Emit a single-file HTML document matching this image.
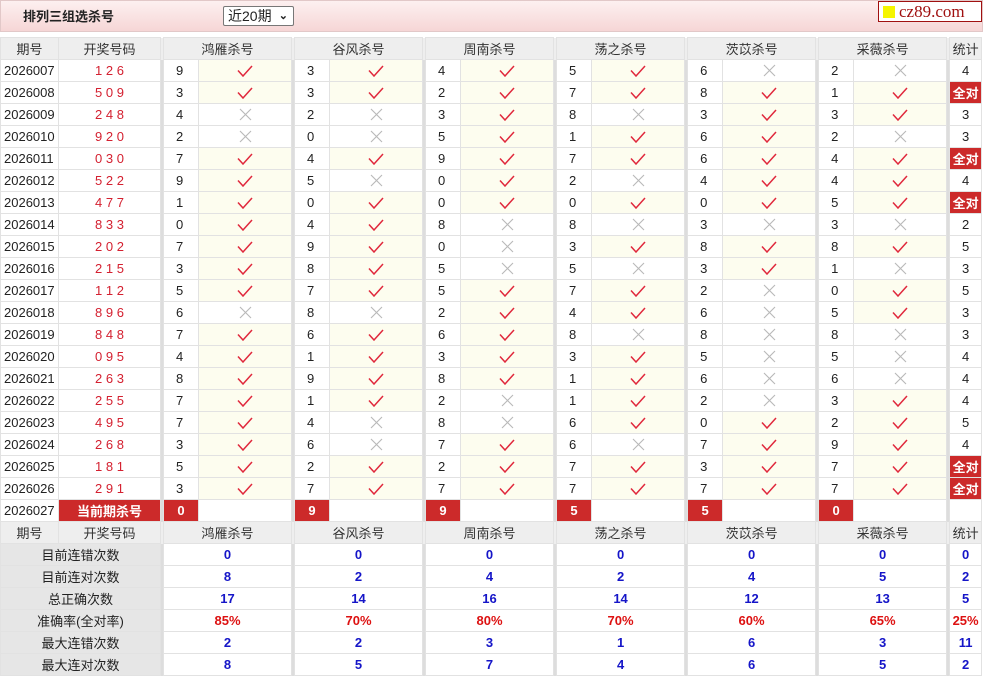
<!DOCTYPE html><html><head><meta charset="utf-8"><style>
body{margin:0;background:#fff;font-family:"Liberation Sans","Noto Sans CJK SC",sans-serif;font-size:13px;color:#222;width:983px;height:674px;overflow:hidden;position:relative}
.top{position:absolute;left:0;top:0;width:981px;height:30px;border:1px solid #e2c8c8;background:linear-gradient(#fdf0f0,#f6d6d6)}
.top b{position:absolute;left:22px;top:5px;font-size:13px}
.sel{position:absolute;left:222px;top:5px;border:1px solid #777;border-radius:2px;background:#fff;font-size:14px;line-height:18px;padding-left:4px;box-sizing:border-box;width:71px;height:20px}
.sel i{position:absolute;right:5px;top:0;font-style:normal;font-size:11px;font-weight:bold}
.logo{position:absolute;left:878px;top:1px;width:102px;height:19px;border:1px solid #a01010;background:#fff;font-family:"Liberation Serif",serif;color:#a01010;font-size:17px;line-height:19px}
.logo span{display:inline-block;width:12px;height:12px;background:#f5f500;margin:0 4px 0 4px;vertical-align:-1px}
table{position:absolute;left:0;top:37px;border-collapse:collapse;table-layout:fixed;width:981px}
td{height:21px;border:1px solid #e2e2e2;text-align:center;padding:0;white-space:pre;overflow:hidden}
tr.h td{background:#eee;color:#333}
td.s{background:#ddd;border:none;width:3px}
td.i{text-align:left;padding-left:3px}
td.k{color:#d42030}
td.n{text-align:left;padding-left:12px}
td.v{background:#fdfdef}
td.q{background:#cc2a2a;color:#fff;font-weight:bold}
td.l{background:#e6e6e6}
td.b{color:#1515c8;font-weight:bold}
td.r{color:#dd1111;font-weight:bold}
svg{display:block;margin:0 auto}
</style></head><body>
<div class="top"><b>排列三组选杀号</b><div class="sel">近20期<i>⌄</i></div></div>
<div class="logo"><span></span>cz89.com</div>
<table>
<colgroup><col style="width:58px"><col style="width:102px"><col style="width:3px"><col style="width:35px"><col style="width:93px"><col style="width:3px"><col style="width:35px"><col style="width:93px"><col style="width:3px"><col style="width:35px"><col style="width:93px"><col style="width:3px"><col style="width:35px"><col style="width:93px"><col style="width:3px"><col style="width:35px"><col style="width:93px"><col style="width:3px"><col style="width:35px"><col style="width:93px"><col style="width:3px"><col style="width:32px"></colgroup>
<tbody id="tb">
<tr class="h"><td>期号</td><td>开奖号码</td><td class="s"></td><td colspan="2">鸿雁杀号</td><td class="s"></td><td colspan="2">谷风杀号</td><td class="s"></td><td colspan="2">周南杀号</td><td class="s"></td><td colspan="2">荡之杀号</td><td class="s"></td><td colspan="2">茨苡杀号</td><td class="s"></td><td colspan="2">采薇杀号</td><td class="s"></td><td>统计</td></tr>
</tbody></table>
<script>
var V='<svg width="16" height="12"><path d="M1 5.5l5 5.5L15 1" fill="none" stroke="#e0283c" stroke-width="1.5"/></svg>';
var X='<svg width="13" height="13"><path d="M1 1l11 11M12 1L1 12" fill="none" stroke="#b8b8b8" stroke-width="1.1"/></svg>';
var d=[["2026007","126","9v3v4v5v6x2x","4"],["2026008","509","3v3v2v7v8v1v","A"],["2026009","248","4x2x3v8x3v3v","3"],["2026010","920","2x0x5v1v6v2x","3"],["2026011","030","7v4v9v7v6v4v","A"],["2026012","522","9v5x0v2x4v4v","4"],["2026013","477","1v0v0v0v0v5v","A"],["2026014","833","0v4v8x8x3x3x","2"],["2026015","202","7v9v0x3v8v8v","5"],["2026016","215","3v8v5x5x3v1x","3"],["2026017","112","5v7v5v7v2x0v","5"],["2026018","896","6x8x2v4v6x5v","3"],["2026019","848","7v6v6v8x8x8x","3"],["2026020","095","4v1v3v3v5x5x","4"],["2026021","263","8v9v8v1v6x6x","4"],["2026022","255","7v1v2x1v2x3v","4"],["2026023","495","7v4x8x6v0v2v","5"],["2026024","268","3v6x7v6x7v9v","4"],["2026025","181","5v2v2v7v3v7v","A"],["2026026","291","3v7v7v7v7v7v","A"]];
var h='';
d.forEach(function(r){h+='<tr><td class="i">'+r[0]+'</td><td class="k">'+r[1].split('').join(' ')+'</td>';
for(var j=0;j<6;j++){var c=r[2][j*2],m=r[2][j*2+1];h+='<td class="s"></td><td class="n">'+c+'</td><td class="'+m+'">'+(m=='v'?V:X)+'</td>';}
h+='<td class="s"></td>'+(r[3]=='A'?'<td class="q">全对</td>':'<td>'+r[3]+'</td>')+'</tr>';});
h+='<tr><td class="i">2026027</td><td class="q">当前期杀号</td>';
[0,9,9,5,5,0].forEach(function(c){h+='<td class="s"></td><td class="q">'+c+'</td><td></td>';});
h+='<td class="s"></td><td></td></tr>';
h+='<tr class="h"><td>期号</td><td>开奖号码</td><td class="s"></td><td colspan="2">鸿雁杀号</td><td class="s"></td><td colspan="2">谷风杀号</td><td class="s"></td><td colspan="2">周南杀号</td><td class="s"></td><td colspan="2">荡之杀号</td><td class="s"></td><td colspan="2">茨苡杀号</td><td class="s"></td><td colspan="2">采薇杀号</td><td class="s"></td><td>统计</td></tr>';
var st=[["目前连错次数","0 0 0 0 0 0 0"],["目前连对次数","8 2 4 2 4 5 2"],["总正确次数","17 14 16 14 12 13 5"],["准确率(全对率)","85% 70% 80% 70% 60% 65% 25%"],["最大连错次数","2 2 3 1 6 3 11"],["最大连对次数","8 5 7 4 6 5 2"]];
st.forEach(function(s,i){var v=s[1].split(' '),cl=i==3?'r':'b';h+='<tr><td class="l" colspan="2">'+s[0]+'</td>';
for(var j=0;j<6;j++)h+='<td class="s"></td><td class="'+cl+'" colspan="2">'+v[j]+'</td>';
h+='<td class="s"></td><td class="'+cl+'">'+v[6]+'</td></tr>';});
document.getElementById('tb').insertAdjacentHTML('beforeend',h);
</script>
</body></html>
